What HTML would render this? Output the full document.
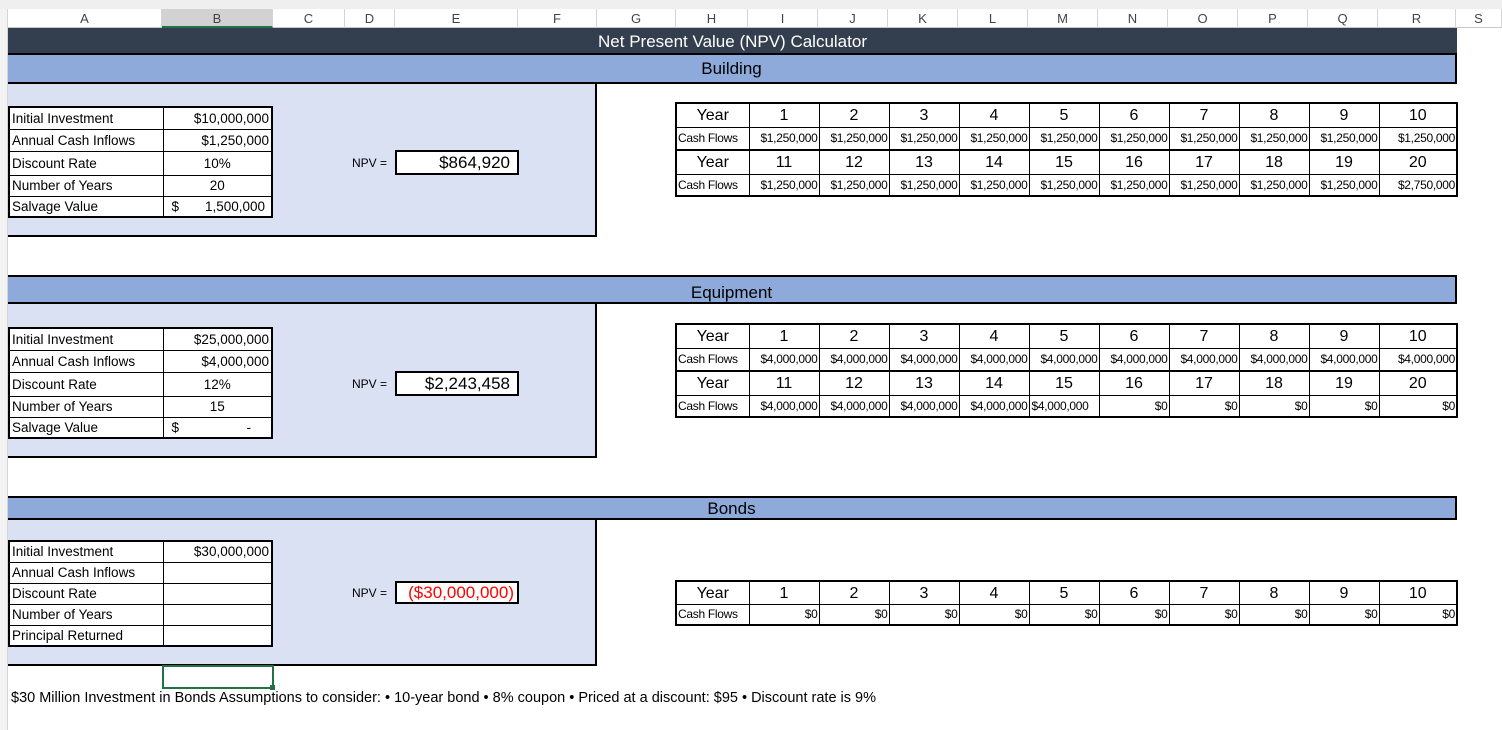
<!DOCTYPE html>
<html><head><meta charset="utf-8"><style>
*{margin:0;padding:0;box-sizing:border-box}
body{width:1502px;height:730px;background:#fff;position:relative;overflow:hidden;font-family:"Liberation Sans",Arial,sans-serif;color:#000}
.a{position:absolute}
.colh{position:absolute;top:9px;height:19px;border-right:1px solid #d4d4d4;border-bottom:1px solid #c8c8c8;font-size:13px;color:#444;text-align:center;line-height:19px;background:#fff}
.bar{position:absolute;left:8px;width:1449px;text-align:center;color:#000;font-size:17px}
.panel{position:absolute;left:8px;width:589px;background:#d9e1f2;border-right:2px solid #000;border-bottom:2px solid #000}
table{border-collapse:collapse;position:absolute;background:#fff}
.lt td{border:1px solid #000;font-size:13.5px;padding:0 2px;white-space:nowrap}
.lt{border:2px solid #000}
.lt td.r{text-align:right}
.lt td.c{text-align:center}
.rt{border:2px solid #000;left:675px;width:782px;table-layout:fixed}
.rt td{border:1px solid #000;text-align:center;white-space:nowrap;overflow:hidden}
.rt tr.y td{font-size:16px;padding-top:2px}
.rt tr.f td{font-size:12px;letter-spacing:-0.3px;text-align:right;padding-right:1px}
.rt tr.f td:first-child{text-align:left;padding-left:1px}
.npvl{position:absolute;left:352px;font-size:12px}
.npv{position:absolute;left:395px;width:124px;border:2px solid #000;background:#fff;text-align:right;padding-right:7px;font-size:17px}
</style></head><body>
<div class="a" style="left:0;top:0;width:1502px;height:9px;background:#efefef"></div>
<div class="a" style="left:0;top:9px;width:8px;height:721px;background:#f3f3f3;border-right:1px solid #d4d4d4"></div>
<div class="colh" style="left:8px;width:154px">A</div>
<div class="colh" style="left:162px;width:111px;background:#d2d2d2;border-bottom:2px solid #217346">B</div>
<div class="colh" style="left:273px;width:72px">C</div>
<div class="colh" style="left:345px;width:50px">D</div>
<div class="colh" style="left:395px;width:123px">E</div>
<div class="colh" style="left:518px;width:79px">F</div>
<div class="colh" style="left:597px;width:79px">G</div>
<div class="colh" style="left:676px;width:72px">H</div>
<div class="colh" style="left:748px;width:70px">I</div>
<div class="colh" style="left:818px;width:70px">J</div>
<div class="colh" style="left:888px;width:70px">K</div>
<div class="colh" style="left:958px;width:70px">L</div>
<div class="colh" style="left:1028px;width:70px">M</div>
<div class="colh" style="left:1098px;width:70px">N</div>
<div class="colh" style="left:1168px;width:70px">O</div>
<div class="colh" style="left:1238px;width:70px">P</div>
<div class="colh" style="left:1308px;width:70px">Q</div>
<div class="colh" style="left:1378px;width:78px">R</div>
<div class="colh" style="left:1456px;width:46px">S</div>

<div class="bar" style="top:28px;height:27px;background:#333f4f;color:#fff;line-height:27px;border-bottom:2px solid #000">Net Present Value (NPV) Calculator</div>
<div class="bar" style="top:55px;height:29px;background:#8eaadb;line-height:28px;border-bottom:2px solid #000;border-right:2px solid #000">Building</div>
<div class="panel" style="top:84px;height:153px"></div>
<table class="lt" style="left:8px;top:106px;width:265px">
<tr style="height:22px"><td style="width:154px">Initial Investment</td><td class="r">$10,000,000</td></tr>
<tr style="height:22px"><td>Annual Cash Inflows</td><td class="r">$1,250,000</td></tr>
<tr style="height:24px"><td>Discount Rate</td><td class="c">10%</td></tr>
<tr style="height:21px"><td>Number of Years</td><td class="c">20</td></tr>
<tr style="height:21px"><td>Salvage Value</td><td><span style="float:left;padding-left:6px">$</span><span style="float:right;padding-right:4px">1,500,000</span></td></tr>
</table>
<div class="npvl" style="top:156px">NPV =</div>
<div class="npv" style="top:150px;height:25px;line-height:21px">$864,920</div>
<table class="rt" style="top:102px">
<colgroup><col style="width:73px"><col span="9" style="width:70px"><col style="width:78px"></colgroup>
<tr class="y" style="height:24px"><td>Year</td><td>1</td><td>2</td><td>3</td><td>4</td><td>5</td><td>6</td><td>7</td><td>8</td><td>9</td><td>10</td></tr>
<tr class="f" style="height:23px"><td>Cash Flows</td><td>$1,250,000</td><td>$1,250,000</td><td>$1,250,000</td><td>$1,250,000</td><td>$1,250,000</td><td>$1,250,000</td><td>$1,250,000</td><td>$1,250,000</td><td>$1,250,000</td><td>$1,250,000</td></tr>
<tr class="y" style="height:24px;border-top:2px solid #000"><td>Year</td><td>11</td><td>12</td><td>13</td><td>14</td><td>15</td><td>16</td><td>17</td><td>18</td><td>19</td><td>20</td></tr>
<tr class="f" style="height:22px"><td>Cash Flows</td><td>$1,250,000</td><td>$1,250,000</td><td>$1,250,000</td><td>$1,250,000</td><td>$1,250,000</td><td>$1,250,000</td><td>$1,250,000</td><td>$1,250,000</td><td>$1,250,000</td><td>$2,750,000</td></tr>
</table>

<div class="bar" style="top:275px;height:29px;background:#8eaadb;line-height:31px;border-top:2px solid #000;border-bottom:2px solid #000;border-right:2px solid #000">Equipment</div>
<div class="panel" style="top:304px;height:154px"></div>
<table class="lt" style="left:8px;top:327px;width:265px">
<tr style="height:22px"><td style="width:154px">Initial Investment</td><td class="r">$25,000,000</td></tr>
<tr style="height:22px"><td>Annual Cash Inflows</td><td class="r">$4,000,000</td></tr>
<tr style="height:24px"><td>Discount Rate</td><td class="c">12%</td></tr>
<tr style="height:21px"><td>Number of Years</td><td class="c">15</td></tr>
<tr style="height:21px"><td>Salvage Value</td><td><span style="float:left;padding-left:6px">$</span><span style="float:right;padding-right:18px">-</span></td></tr>
</table>
<div class="npvl" style="top:377px">NPV =</div>
<div class="npv" style="top:371px;height:25px;line-height:21px">$2,243,458</div>
<table class="rt" style="top:323px">
<colgroup><col style="width:73px"><col span="9" style="width:70px"><col style="width:78px"></colgroup>
<tr class="y" style="height:24px"><td>Year</td><td>1</td><td>2</td><td>3</td><td>4</td><td>5</td><td>6</td><td>7</td><td>8</td><td>9</td><td>10</td></tr>
<tr class="f" style="height:23px"><td>Cash Flows</td><td>$4,000,000</td><td>$4,000,000</td><td>$4,000,000</td><td>$4,000,000</td><td>$4,000,000</td><td>$4,000,000</td><td>$4,000,000</td><td>$4,000,000</td><td>$4,000,000</td><td>$4,000,000</td></tr>
<tr class="y" style="height:24px;border-top:2px solid #000"><td>Year</td><td>11</td><td>12</td><td>13</td><td>14</td><td>15</td><td>16</td><td>17</td><td>18</td><td>19</td><td>20</td></tr>
<tr class="f" style="height:22px"><td>Cash Flows</td><td>$4,000,000</td><td>$4,000,000</td><td>$4,000,000</td><td>$4,000,000</td><td style="text-align:left;padding-left:2px">$4,000,000</td><td>$0</td><td>$0</td><td>$0</td><td>$0</td><td>$0</td></tr>
</table>

<div class="bar" style="top:496px;height:24px;background:#8eaadb;line-height:22px;border-top:2px solid #000;border-bottom:2px solid #000;border-right:2px solid #000">Bonds</div>
<div class="panel" style="top:520px;height:146px"></div>
<table class="lt" style="left:8px;top:540px;width:265px">
<tr style="height:21px"><td style="width:154px">Initial Investment</td><td class="r">$30,000,000</td></tr>
<tr style="height:21px"><td>Annual Cash Inflows</td><td></td></tr>
<tr style="height:21px"><td>Discount Rate</td><td></td></tr>
<tr style="height:21px"><td>Number of Years</td><td></td></tr>
<tr style="height:21px"><td>Principal Returned</td><td></td></tr>
</table>
<div class="npvl" style="top:586px">NPV =</div>
<div class="npv" style="top:581px;height:23px;line-height:19px;width:124px;color:#f00;padding-right:3px">($30,000,000)</div>
<table class="rt" style="top:580px">
<colgroup><col style="width:73px"><col span="9" style="width:70px"><col style="width:78px"></colgroup>
<tr class="y" style="height:23px"><td>Year</td><td>1</td><td>2</td><td>3</td><td>4</td><td>5</td><td>6</td><td>7</td><td>8</td><td>9</td><td>10</td></tr>
<tr class="f" style="height:21px"><td>Cash Flows</td><td>$0</td><td>$0</td><td>$0</td><td>$0</td><td>$0</td><td>$0</td><td>$0</td><td>$0</td><td>$0</td><td>$0</td></tr>
</table>

<div class="a" style="left:162px;top:665px;width:112px;height:24px;border:2px solid #217346"></div>
<div class="a" style="left:270px;top:685px;width:5px;height:5px;background:#217346"></div>
<div class="a" style="left:11px;top:690px;font-size:14.5px;white-space:nowrap">$30 Million Investment in Bonds Assumptions to consider: • 10-year bond • 8% coupon • Priced at a discount: $95 • Discount rate is 9%</div>
</body></html>
